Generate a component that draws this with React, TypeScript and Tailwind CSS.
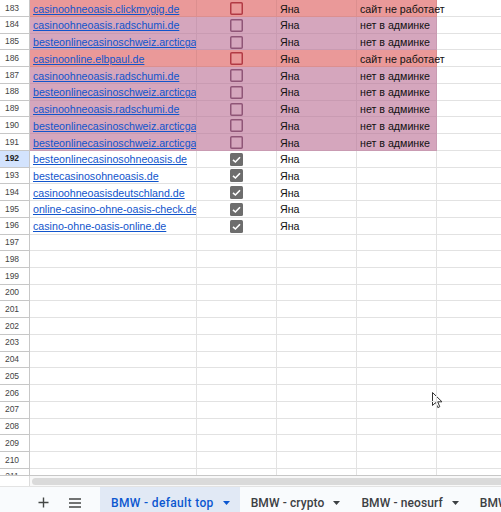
import React from "react";

type Tone = "red" | "pink" | "none";

type Row = {
  n: number;
  url?: string;
  tone?: Tone;
  checked?: boolean;
  who?: string;
  note?: string;
};

const RADSCHUMI = "casinoohneoasis.radschumi.de";
const ARCTIC = "besteonlinecasinoschweiz.arcticgaming.de";

const rows: Row[] = [
  { n: 183, url: "casinoohneoasis.clickmygig.de", tone: "red", who: "Яна", note: "сайт не работает" },
  { n: 184, url: RADSCHUMI, tone: "pink", who: "Яна", note: "нет в админке" },
  { n: 185, url: ARCTIC, tone: "pink", who: "Яна", note: "нет в админке" },
  { n: 186, url: "casinoonline.elbpaul.de", tone: "red", who: "Яна", note: "сайт не работает" },
  { n: 187, url: RADSCHUMI, tone: "pink", who: "Яна", note: "нет в админке" },
  { n: 188, url: ARCTIC, tone: "pink", who: "Яна", note: "нет в админке" },
  { n: 189, url: RADSCHUMI, tone: "pink", who: "Яна", note: "нет в админке" },
  { n: 190, url: ARCTIC, tone: "pink", who: "Яна", note: "нет в админке" },
  { n: 191, url: ARCTIC, tone: "pink", who: "Яна", note: "нет в админке" },
  { n: 192, url: "besteonlinecasinosohneoasis.de", checked: true, who: "Яна" },
  { n: 193, url: "bestecasinosohneoasis.de", checked: true, who: "Яна" },
  { n: 194, url: "casinoohneoasisdeutschland.de", checked: true, who: "Яна" },
  { n: 195, url: "online-casino-ohne-oasis-check.de", checked: true, who: "Яна" },
  { n: 196, url: "casino-ohne-oasis-online.de", checked: true, who: "Яна" },
];
for (let n = 197; n <= 211; n++) rows.push({ n });

const toneCell: Record<Tone, string> = {
  red: "bg-[#ea9999] border-[#dc8f8f]",
  pink: "bg-[#d5a6bd] border-[#c99bb2]",
  none: "border-[#e2e2e2]",
};

function CheckBox({ tone, checked }: { tone: Tone; checked?: boolean }) {
  if (checked) {
    return (
      <svg width="13" height="13" viewBox="0 0 13 13">
        <rect x="0" y="0" width="13" height="13" rx="1.5" fill="#6d6d6d" />
        <path d="M3 6.8 L5.4 9 L10 4.2" fill="none" stroke="#fff" strokeWidth="1.6" />
      </svg>
    );
  }
  const stroke = tone === "red" ? "#b23a44" : "#8f5577";
  return (
    <svg width="13" height="13" viewBox="0 0 13 13">
      <rect x="0.75" y="0.75" width="11.5" height="11.5" rx="1" fill="none" stroke={stroke} strokeWidth="1.5" />
    </svg>
  );
}

function SheetRow({ row, first }: { row: Row; first: boolean }) {
  const tone: Tone = row.tone ?? "none";
  const selected = row.n === 192;
  const h = first ? "h-[17px]" : "h-[16.74px]";
  const cell = `shrink-0 border-r border-b flex items-center pt-[1px] ${toneCell[tone]}`;
  return (
    <div className={`flex ${h}`}>
      <div
        className={`w-[30px] shrink-0 flex items-center justify-center pr-[5px] border-r border-b border-[#c7c7c7] text-[8.5px] ${
          selected ? "bg-[#d3e3fd] font-bold text-[#1f1f1f]" : "bg-white text-[#444]"
        }`}
      >
        {row.n}
      </div>
      <div className={`${cell} w-[167px] overflow-hidden whitespace-nowrap pl-[3px]`}>
        {row.url && <span className="text-[#1155cc] underline">{row.url}</span>}
      </div>
      <div className={`${cell} w-[80px] justify-center`}>
        {row.url && <CheckBox tone={tone} checked={row.checked} />}
      </div>
      <div className={`${cell} w-[80px] pl-[3px] text-[#111]`}>{row.who}</div>
      <div className={`${cell} w-[80px] pl-[3px] whitespace-nowrap text-[#111] relative z-10`}>{row.note}</div>
      <div className="flex-1 border-b border-[#e2e2e2]" />
    </div>
  );
}

function SheetTab({ label, active }: { label: string; active?: boolean }) {
  return (
    <div
      className={`flex h-full shrink-0 items-center gap-[9px] pl-[11px] pr-[10px] ${
        active ? "bg-[#e1e9f5] text-[#0b57d0] tracking-[0.35px]" : "text-[#3c4043] tracking-[0.1px]"
      }`}
    >
      <span>{label}</span>
      <svg width="7" height="4" viewBox="0 0 7 4">
        <path d="M0 0 H7 L3.5 4 Z" fill="currentColor" />
      </svg>
    </div>
  );
}

export default function App() {
  return (
    <div className="relative w-[501px] h-[512px] overflow-hidden bg-white font-['Liberation_Sans',Arial,sans-serif] text-[10.67px]">
      <div className="h-[475px] overflow-hidden">
        {rows.map((r, i) => (
          <SheetRow key={r.n} row={r} first={i === 0} />
        ))}
      </div>

      {/* horizontal scrollbar */}
      <div className="flex h-[11px] border-t border-[#c7c7c7] bg-[#f8f8f8]">
        <div className="w-[30px] shrink-0 border-r border-[#dcdcdc] bg-white" />
        <div className="flex flex-1 items-center pl-[2px]">
          <div className="h-[7px] w-[520px] rounded-full bg-[#dadada]" />
        </div>
      </div>

      {/* sheet tabs */}
      <div className="flex h-[32px] items-center border-t border-[#e3e3e3] bg-[#f9fbfd] font-['Roboto',sans-serif] text-[12px] font-medium">
        <div className="flex w-[100px] shrink-0 items-center pl-[38px] gap-[20px] text-[#444746]">
          <svg width="11" height="11" viewBox="0 0 11 11">
            <path d="M5.5 0.5 V10.5 M0.5 5.5 H10.5" stroke="currentColor" strokeWidth="1.4" />
          </svg>
          <svg width="12" height="10" viewBox="0 0 12 10">
            <path d="M0 1 H12 M0 5 H12 M0 9 H12" stroke="currentColor" strokeWidth="1.4" />
          </svg>
        </div>
        <SheetTab label="BMW - default top" active />
        <SheetTab label="BMW - crypto" />
        <SheetTab label="BMW - neosurf" />
        <SheetTab label="BMW - cashlib" />
      </div>

      {/* mouse pointer */}
      <svg className="absolute left-[432px] top-[392px]" width="12" height="18" viewBox="0 0 12 18">
        <path
          d="M0.5 0.5 L0.5 13.5 L3.6 10.6 L5.8 15.6 L7.8 14.7 L5.7 9.8 L10 9.8 Z"
          fill="#fff"
          stroke="#333"
          strokeWidth="1"
          strokeLinejoin="round"
        />
      </svg>
    </div>
  );
}
